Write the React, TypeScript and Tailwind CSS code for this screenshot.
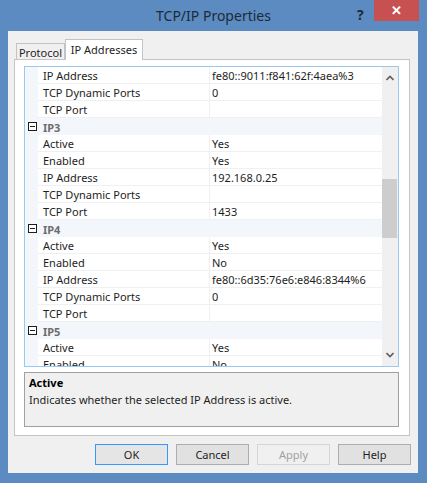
import type { ReactNode } from "react";

type Row = { kind: "prop"; name: string; value?: string } | { kind: "cat"; name: string };

const ROWS: Row[] = [
  { kind: "prop", name: "IP Address", value: "fe80::9011:f841:62f:4aea%3" },
  { kind: "prop", name: "TCP Dynamic Ports", value: "0" },
  { kind: "prop", name: "TCP Port" },
  { kind: "cat", name: "IP3" },
  { kind: "prop", name: "Active", value: "Yes" },
  { kind: "prop", name: "Enabled", value: "Yes" },
  { kind: "prop", name: "IP Address", value: "192.168.0.25" },
  { kind: "prop", name: "TCP Dynamic Ports" },
  { kind: "prop", name: "TCP Port", value: "1433" },
  { kind: "cat", name: "IP4" },
  { kind: "prop", name: "Active", value: "Yes" },
  { kind: "prop", name: "Enabled", value: "No" },
  { kind: "prop", name: "IP Address", value: "fe80::6d35:76e6:e846:8344%6" },
  { kind: "prop", name: "TCP Dynamic Ports", value: "0" },
  { kind: "prop", name: "TCP Port" },
  { kind: "cat", name: "IP5" },
  { kind: "prop", name: "Active", value: "Yes" },
  { kind: "prop", name: "Enabled", value: "No" },
];

const font = "font-['Segoe_UI','Noto_Sans','Liberation_Sans',sans-serif]";

function Minus() {
  return (
    <span className="flex h-[9px] w-[9px] items-center justify-center border border-[#1e1e1e] bg-white">
      <span className="h-px w-[5px] bg-[#1e1e1e]" />
    </span>
  );
}

function GridRow({ row }: { row: Row }) {
  if (row.kind === "cat") {
    return (
      <div className="flex h-[17px] bg-[#f3f6fb]">
        <div className="flex w-[13px] items-center justify-center pl-[1px]"><Minus /></div>
        <div className="flex items-center pl-[5px] pt-px text-[11px] font-bold leading-none text-[#6d6d6d]">{row.name}</div>
      </div>
    );
  }
  return (
    <div className="flex h-[17px]">
      <div className="w-[13px] bg-[#f3f6fb]" />
      <div className="flex w-[172px] items-center border-b border-r border-[#f0f0f0] pl-[5px] pt-px text-[11px] leading-none text-[#1e1e1e]">{row.name}</div>
      <div className="flex flex-1 items-center border-b border-[#f0f0f0] pl-[2px] pt-px text-[11px] leading-none text-[#1e1e1e]">{row.value}</div>
    </div>
  );
}

function Btn({ children, primary, disabled }: { children: ReactNode; primary?: boolean; disabled?: boolean }) {
  return (
    <div
      className={
        "flex h-[21px] w-[73px] items-center justify-center border text-[11px] leading-none " +
        (disabled
          ? "border-[#d5d5d5] bg-[#f0f0f0] text-[#a0a0a0]"
          : primary
            ? "border-[#3399ff] bg-[#e5e5e5] text-[#1e1e1e]"
            : "border-[#adadad] bg-[#e1e1e1] text-[#1e1e1e]")
      }
    >
      {children}
    </div>
  );
}

export default function App() {
  return (
    <div className={"flex h-[483px] w-[427px] flex-col bg-[#5b8bc1] " + font}>
      {/* title bar */}
      <div className="relative flex h-[31px] items-center justify-center">
        <span className="pb-[1px] text-[14px] text-[#1e2a36]">TCP/IP Properties</span>
        <span className="absolute left-[357px] top-[4px] text-[14px] font-bold text-[#1e2a36]">?</span>
        <div className="absolute left-[374px] top-0 flex h-[21px] w-[45px] items-center justify-center bg-[#c75050] text-[13px] font-bold text-white">✕</div>
      </div>

      {/* client */}
      <div className="ml-[8px] mr-[9px] mb-[10px] flex flex-1 flex-col bg-[#f0f0f0] px-[6px] pt-[8px]">
        {/* tabs */}
        <div className="relative z-10 flex h-[20px] items-end pl-[2px]">
          <div className="flex h-[16px] w-[49px] items-center justify-center border border-b-0 border-[#c4c4c4] bg-[#f0f0f0] pt-px text-[11px] leading-none text-[#1e1e1e]">Protocol</div>
          <div className="-mb-px flex h-[21px] w-[78px] items-center justify-center border border-b-0 border-[#c4c4c4] bg-white pb-[2px] text-[11px] leading-none text-[#1e1e1e]">IP Addresses</div>
        </div>
        <div className="flex h-[377px] w-[396px] flex-col border border-[#c4c4c4] bg-white px-[9px] pt-[6px]">
          {/* property grid */}
          <div className="flex h-[301px] w-[375px] border border-[#99c9ef] bg-white">
            <div className="flex-1 overflow-hidden">
              {ROWS.map((r, i) => <GridRow key={i} row={r} />)}
            </div>
            <div className="relative w-[16px] bg-[#f0f0f0]">
              <svg className="absolute left-[4px] top-[8px]" width="8" height="6" viewBox="0 0 8 6"><path d="M0.5 5 L4 1.5 L7.5 5" fill="none" stroke="#606060" strokeWidth="1.6" /></svg>
              <div className="absolute left-0 top-[112px] h-[59px] w-[15px] bg-[#cdcdcd]" />
              <svg className="absolute bottom-[8px] left-[4px]" width="8" height="6" viewBox="0 0 8 6"><path d="M0.5 1 L4 4.5 L7.5 1" fill="none" stroke="#606060" strokeWidth="1.6" /></svg>
            </div>
          </div>
          {/* description */}
          <div className="mt-[5px] h-[55px] w-[375px] border border-[#a0a0a0] bg-[#f0f0f0] px-[4px] pt-[2px]">
            <div className="text-[11px] font-bold leading-[16px] text-[#000]">Active</div>
            <div className="mt-px text-[11px] leading-[16px] text-[#1e1e1e]">Indicates whether the selected IP Address is active.</div>
          </div>
        </div>
        {/* buttons */}
        <div className="mt-[8px] flex justify-end gap-[8px] pr-[1px]">
          <Btn primary>OK</Btn>
          <Btn>Cancel</Btn>
          <Btn disabled>Apply</Btn>
          <Btn>Help</Btn>
        </div>
      </div>
    </div>
  );
}
